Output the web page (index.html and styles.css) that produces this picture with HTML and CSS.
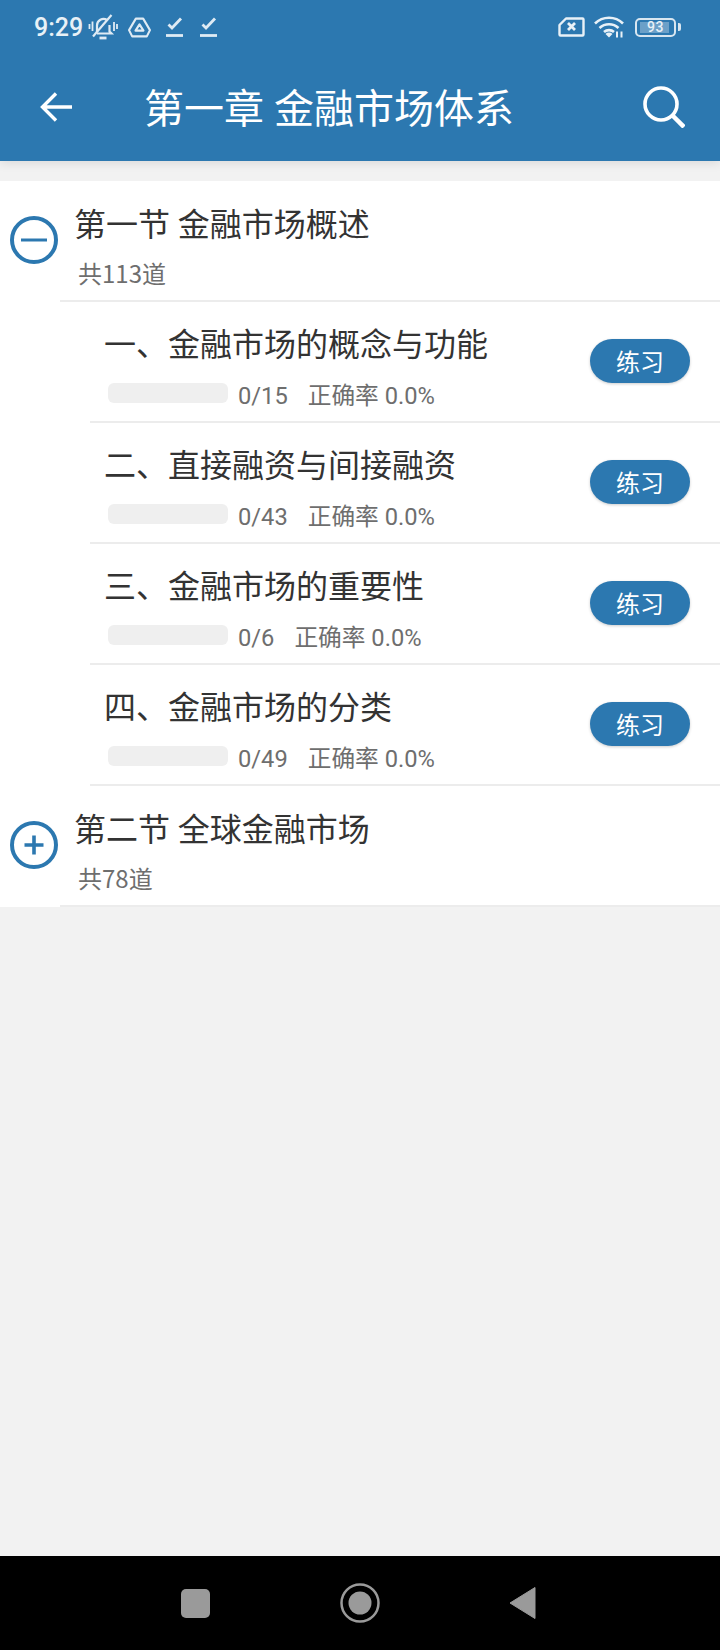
FILE: index.html
```html
<!DOCTYPE html>
<html lang="zh">
<head>
<meta charset="utf-8">
<title>第一章 金融市场体系</title>
<link rel="stylesheet" href="styles.css">
</head>
<body>
<div class="app">
  <header class="header">
    <div class="status">
      <span class="time">9:29</span>
      <svg class="ic-bell" viewBox="0 0 30 26" fill="none" stroke="#dfebf4" stroke-width="2.200"><path d="M9 18v-6.500a6.500 6.500 0 0 1 10-5.500M21.500 11v6.500l2 2H9"/><path d="M11.500 24h7" stroke-width="2.800"/><path d="M5 22.500L23.500 1"/><path d="M1.500 10v5M4.500 7.500v9.500M26 8v9M29 10v5" stroke-width="1.800"/></svg>
      <svg class="ic-drive" viewBox="0 0 22 20" fill="none" stroke="#dfebf4" stroke-width="2" stroke-linejoin="round"><path d="M7.500 1.500h7L21 12.500 18 18.500H4L1 12.500z"/><path d="M11 7l3.800 6H7.200z"/></svg>
      <svg class="ic-check" viewBox="0 0 17 20" fill="none" stroke="#dfebf4" stroke-width="2.800"><path d="M2.500 7.500l3.500 3.500L15 1.500"/><path d="M0 18.500h17"/></svg>
      <svg class="ic-check second" viewBox="0 0 17 20" fill="none" stroke="#dfebf4" stroke-width="2.800"><path d="M2.500 7.500l3.500 3.500L15 1.500"/><path d="M0 18.500h17"/></svg>
      <span class="status-gap"></span>
      <svg class="ic-sim" viewBox="0 0 27 20" fill="none" stroke="#e8f1f7" stroke-width="2.400"><path d="M8 1.500h16.500a1 1 0 0 1 1 1v15a1 1 0 0 1-1 1H2.500a1 1 0 0 1-1-1V8z" stroke-linejoin="round"/><path d="M10 6l7 7M17 6l-7 7" stroke-width="2.800"/></svg>
      <svg class="ic-wifi" viewBox="0 0 30 22" fill="none" stroke="#e8f1f7" stroke-width="2.600"><path d="M1 7.500a20 20 0 0 1 28 0M5.500 12a14 14 0 0 1 19 0M10 16a7.500 7.500 0 0 1 10 0"/><path d="M11.500 18l3.500 3.500 3.500-3.500a5 5 0 0 0-7 0z" fill="#e8f1f7" stroke="none"/><path d="M23 15.500v6M27.500 15.500v6" stroke-width="2"/></svg>
      <span class="battery"><span class="battery-fill"></span><span class="battery-num">93</span></span>
      <span class="battery-nub"></span>
    </div>
    <div class="toolbar">
      <svg class="ic-back" viewBox="0 0 32 30" fill="none" stroke="#fff" stroke-width="3.400"><path d="M32 15H3M16 1.500L2.500 15 16 28.500"/></svg>
      <h1 class="title">第一章 金融市场体系</h1>
      <svg class="ic-search" viewBox="0 0 42 42" fill="none" stroke="#fff" stroke-width="3.600"><circle cx="18" cy="18" r="16"/><path d="M29.500 29.500L41 41" stroke-width="4.500"/></svg>
    </div>
  </header>

  <main class="list">
    <section class="chapter">
      <div class="chapter-head">
        <svg class="toggle" viewBox="0 0 48 48" fill="none" stroke="#2c78b0"><circle cx="24" cy="24" r="22" stroke-width="4"/><path d="M11 24h26" stroke-width="3"/></svg>
        <div class="chapter-text">
          <div class="chapter-title">第一节 金融市场概述</div>
          <div class="chapter-count">共113道</div>
        </div>
      </div>
      <div class="row">
        <div class="row-main">
          <div class="row-title">一、金融市场的概念与功能</div>
          <div class="row-meta"><span class="bar"></span><span class="done">0/15</span><span class="rate">正确率 0.0%</span></div>
        </div>
        <button class="practice">练习</button>
      </div>
      <div class="row">
        <div class="row-main">
          <div class="row-title">二、直接融资与间接融资</div>
          <div class="row-meta"><span class="bar"></span><span class="done">0/43</span><span class="rate">正确率 0.0%</span></div>
        </div>
        <button class="practice">练习</button>
      </div>
      <div class="row">
        <div class="row-main">
          <div class="row-title">三、金融市场的重要性</div>
          <div class="row-meta"><span class="bar"></span><span class="done">0/6</span><span class="rate">正确率 0.0%</span></div>
        </div>
        <button class="practice">练习</button>
      </div>
      <div class="row">
        <div class="row-main">
          <div class="row-title">四、金融市场的分类</div>
          <div class="row-meta"><span class="bar"></span><span class="done">0/49</span><span class="rate">正确率 0.0%</span></div>
        </div>
        <button class="practice">练习</button>
      </div>
    </section>
    <section class="chapter">
      <div class="chapter-head">
        <svg class="toggle" viewBox="0 0 48 48" fill="none" stroke="#2c78b0"><circle cx="24" cy="24" r="22" stroke-width="4"/><path d="M14.500 24h19M24 14.500v19" stroke-width="3.600"/></svg>
        <div class="chapter-text">
          <div class="chapter-title">第二节 全球金融市场</div>
          <div class="chapter-count">共78道</div>
        </div>
      </div>
    </section>
  </main>

  <nav class="navbar">
    <span class="nav-square"></span>
    <svg class="nav-home" viewBox="0 0 40 40"><circle cx="20" cy="20" r="18.500" fill="none" stroke="#9a9a9a" stroke-width="2.500"/><circle cx="20" cy="20" r="11.500" fill="#9a9a9a"/></svg>
    <svg class="nav-back" viewBox="0 0 27 34"><path d="M26 1.500v31L1 17z" fill="#9a9a9a" stroke="#9a9a9a" stroke-linejoin="round"/></svg>
  </nav>
</div>
</body>
</html>
```

FILE: styles.css
```css
* { box-sizing: border-box; }
html, body { margin: 0; padding: 0; }
body {
  width: 720px;
  height: 1650px;
  overflow: hidden;
  background: #f2f2f2;
  font-family: "Noto Sans CJK SC", Roboto, sans-serif;
  color: #333;
}
.app { display: flex; flex-direction: column; height: 1650px; }

.header {
  height: 161px;
  flex: none;
  background: #2c78b0;
  box-shadow: 0 2px 10px rgba(0, 0, 0, 0.1);
  position: relative;
}
.status {
  display: flex;
  align-items: center;
  height: 54px;
  padding-left: 34px;
  color: #e8f1f7;
}
.time { font: 500 25px/28px Roboto, sans-serif; width: 54px; padding-top: 2px; }
.ic-bell { width: 30px; height: 26px; flex: none; }
.ic-drive { width: 23px; height: 21px; margin-left: 10px; flex: none; }
.ic-check { width: 17px; height: 20px; margin-left: 15px; flex: none; }
.ic-check.second { margin-left: 17px; }
.status-gap { flex: 1; }
.ic-sim { width: 27px; height: 20px; flex: none; }
.ic-wifi { width: 30px; height: 22px; margin-left: 9px; flex: none; }
.battery {
  width: 41px;
  height: 19px;
  margin-left: 11px;
  border: 2px solid #d8e6f0;
  border-radius: 5px;
  position: relative;
  display: flex;
  align-items: center;
  justify-content: center;
  flex: none;
}
.battery-fill {
  position: absolute;
  left: 3px;
  top: 2px;
  bottom: 2px;
  width: 29px;
  background: rgba(255, 255, 255, 0.3);
}
.battery-num { position: relative; font: 500 14px/15px Roboto, sans-serif; color: #e8f1f7; letter-spacing: 0.5px; }
.battery-nub {
  width: 3px;
  height: 8px;
  margin-left: 2px;
  margin-right: 39px;
  background: #d8e6f0;
  border-radius: 0 2px 2px 0;
  flex: none;
}

.toolbar {
  display: flex;
  align-items: center;
  height: 107px;
  padding: 0 35px 0 40px;
}
.ic-back { width: 32px; height: 30px; flex: none; margin-bottom: 2px; }
.title {
  flex: 1;
  margin: 0 0 4px 72px;
  font-size: 40px;
  font-weight: 400;
  line-height: 50px;
  color: #fff;
  white-space: nowrap;
  word-spacing: 1px;
}
.ic-search { width: 42px; height: 42px; flex: none; margin-bottom: 2px; }

.list { margin-top: 20px; background: #fff; }
.chapter-head {
  display: flex;
  align-items: flex-start;
  height: 121px;
  position: relative;
}
.toggle { width: 48px; height: 48px; flex: none; margin: 35px 0 0 10px; }
.chapter-text {
  flex: 1;
  height: 121px;
  margin-left: 2px;
  padding: 19px 0 0 15px;
  border-bottom: 2px solid #ececec;
}
.chapter-title { font-size: 32px; line-height: 44px; color: #333; margin-left: -1px; word-spacing: 0.500px; }
.chapter-count { font-size: 24px; line-height: 34px; color: #6e6e6e; margin: 12px 0 0 3px; }

.row {
  display: flex;
  align-items: center;
  height: 121px;
  margin-left: 90px;
  padding-right: 30px;
  border-bottom: 2px solid #ececec;
}
.row-main { flex: 1; align-self: flex-start; padding: 18px 0 0 14px; }
.row-title { font-size: 32px; line-height: 44px; color: #333; }
.row-meta {
  display: flex;
  align-items: center;
  height: 34px;
  margin: 12px 0 0 4px;
  font: 23.700px/34px Roboto, "Noto Sans CJK SC", sans-serif;
  color: #6e6e6e;
}
.bar { width: 120px; height: 20px; margin: 0 10px 0 0; background: #efefef; border-radius: 6px; }
.done { position: relative; top: 3px; }
.rate { margin-left: 20px; position: relative; top: 3px; }
.practice {
  width: 100px;
  height: 44px;
  padding: 0;
  border: 0;
  border-radius: 22px;
  background: #2c78b0;
  color: #fff;
  font: 24px/44px "Noto Sans CJK SC", sans-serif;
  box-shadow: 0 1px 3px rgba(0, 0, 0, 0.2);
  margin-bottom: 2px;
}

.navbar {
  margin-top: auto;
  height: 94px;
  flex: none;
  background: #000;
  position: relative;
  display: grid;
  grid-template-columns: 29px 40px 27px;
  justify-content: space-between;
  align-items: center;
  padding: 0 184px 0 181px;
}
.nav-square { width: 29px; height: 29px; background: #9a9a9a; border-radius: 5px; }
.nav-home { width: 40px; height: 40px; }
.nav-back { width: 27px; height: 34px; }
```
